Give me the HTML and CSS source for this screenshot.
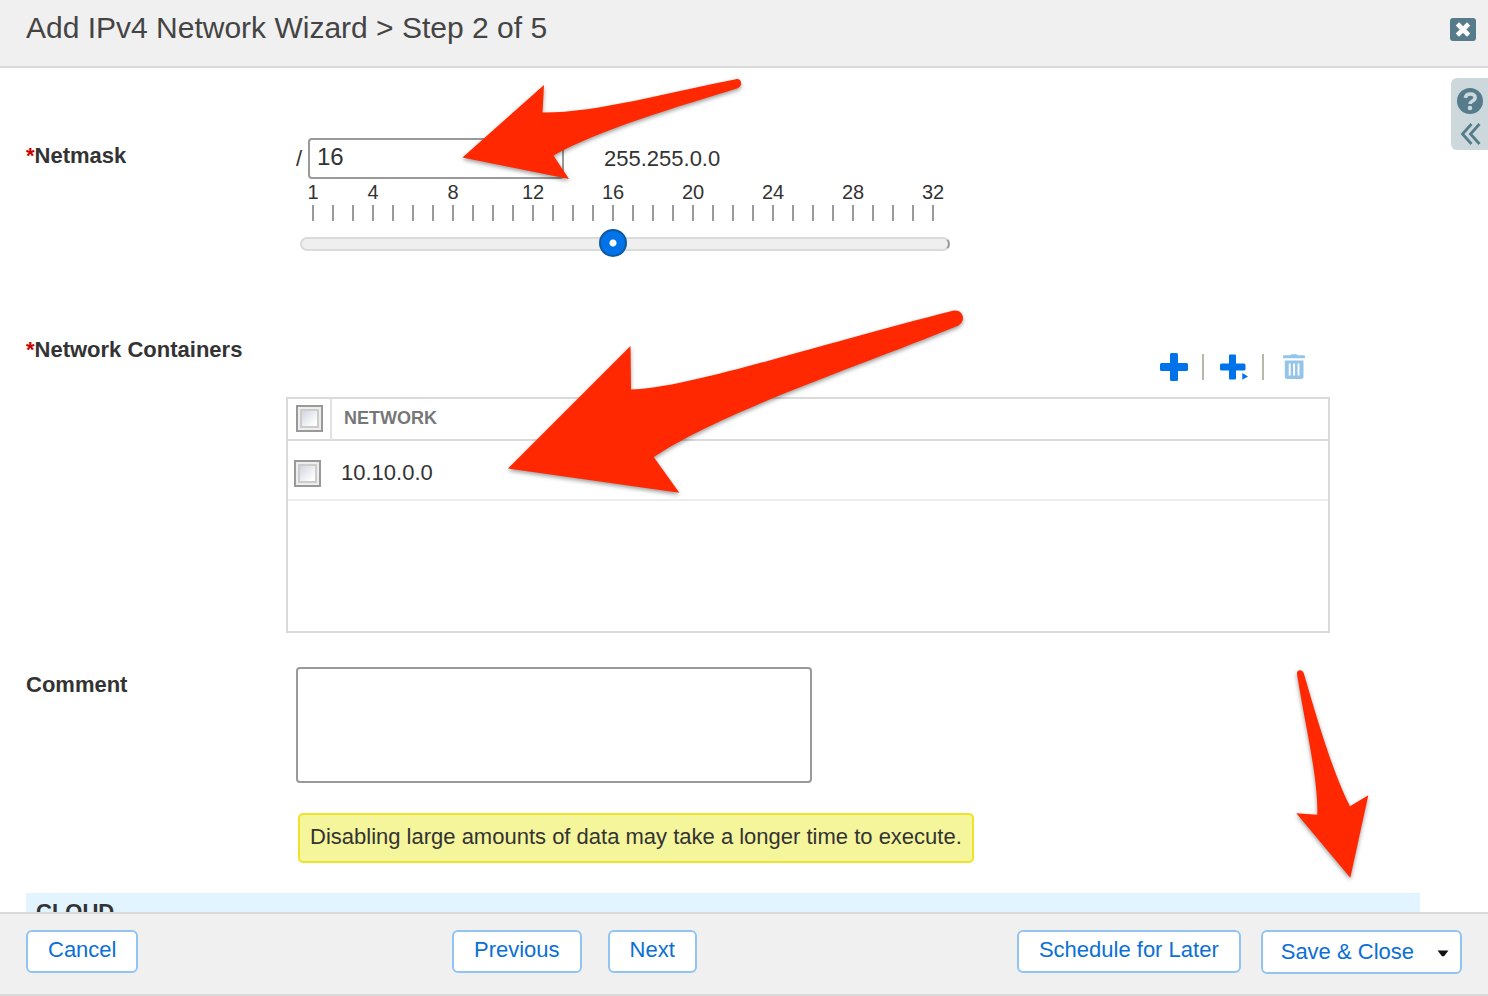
FILE: index.html
```html
<!DOCTYPE html>
<html lang="en">
<head>
  <meta charset="UTF-8" />
  <title>Add IPv4 Network Wizard</title>
  <meta name="viewport" content="width=device-width, initial-scale=1.0"/>
  <link rel="stylesheet" href="styles.css">
</head>
<body>
  <header class="wizard-header">
    <h1>Add IPv4 Network Wizard &gt; Step 2 of 5</h1>
    <button type="button" class="close-btn" aria-label="Close">
      <svg width="26" height="23" viewBox="0 0 26 23"><path d="M9 7.500l8 8M17 7.500l-8 8" stroke="#fff" stroke-width="4.600" stroke-linecap="square" fill="none"/></svg>
    </button>
  </header>

  <main class="wizard-body">
    <form id="wizardForm">
      <div class="form-row netmask-row">
        <label class="row-label" for="netmask"><span class="required">*</span>Netmask</label>
        <div class="row-field">
          <div class="netmask-line">
            <span class="slash">/</span>
            <input type="text" id="netmask" class="netmask-input" value="16" />
            <output class="netmask-value" for="netmask">255.255.0.0</output>
          </div>
          <div class="scale">
            <span>1</span><span></span><span></span><span>4</span>
            <span></span><span></span><span></span><span>8</span>
            <span></span><span></span><span></span><span>12</span>
            <span></span><span></span><span></span><span>16</span>
            <span></span><span></span><span></span><span>20</span>
            <span></span><span></span><span></span><span>24</span>
            <span></span><span></span><span></span><span>28</span>
            <span></span><span></span><span></span><span>32</span>
          </div>
          <div class="slider">
            <input type="range" min="1" max="32" value="16" aria-label="Netmask bits" />
          </div>
        </div>
      </div>

      <div class="form-row network-row">
        <span class="row-label" id="containersLabel"><span class="required">*</span>Network Containers</span>
        <div class="row-field containers">
          <div class="toolbar">
            <button type="button" aria-label="Add">
              <svg width="28" height="28" viewBox="0 0 28 28"><path d="M11.500 0h5a1.500 1.500 0 0 1 1.500 1.500V10h8.500a1.500 1.500 0 0 1 1.500 1.500v5a1.500 1.500 0 0 1-1.500 1.500H18v8.500a1.500 1.500 0 0 1-1.500 1.500h-5a1.500 1.500 0 0 1-1.500-1.500V18H1.500A1.500 1.500 0 0 1 0 16.500v-5A1.500 1.500 0 0 1 1.500 10H10V1.500A1.500 1.500 0 0 1 11.500 0z" fill="#0073ea"/></svg>
            </button>
            <span class="separator"></span>
            <button type="button" aria-label="Add next available">
              <svg width="28" height="28" viewBox="0 0 28 28"><path d="M10 1.500h5a1 1 0 0 1 1 1v8h8a1.500 1.500 0 0 1 1.500 1.500v4A1.500 1.500 0 0 1 24 17.500h-8v8a1 1 0 0 1-1 1h-5a1 1 0 0 1-1-1v-8H1.500A1.500 1.500 0 0 1 0 16v-4a1.500 1.500 0 0 1 1.500-1.500H9v-8a1 1 0 0 1 1-1zM22.300 20l5.900 3.500-5.900 3.300z" fill="#0073ea"/></svg>
            </button>
            <span class="separator"></span>
            <button type="button" aria-label="Delete">
              <svg width="28" height="28" viewBox="0 0 28 28"><path d="M10.500 2.300c.3-.8.700-1 1.500-1h4c.8 0 1.200.2 1.500 1h6.300c.8 0 1.200.4 1.200 1.200v1.800H3V3.500c0-.8.400-1.200 1.200-1.200zM4.800 7.500h18.700v16a2.500 2.500 0 0 1-2.500 2.500H7.300a2.500 2.500 0 0 1-2.500-2.500z" fill="#94c5e8"/><path d="M9.700 10.500v12M14.100 10.500v12M18.500 10.500v12" stroke="#fff" stroke-width="1.900"/></svg>
            </button>
          </div>
          <div class="table-box">
            <table aria-labelledby="containersLabel">
              <thead>
                <tr>
                  <th class="check-cell"><input type="checkbox" aria-label="Select all" /></th>
                  <th>NETWORK</th>
                </tr>
              </thead>
              <tbody>
                <tr>
                  <td class="check-cell"><input type="checkbox" aria-label="Select 10.10.0.0" /></td>
                  <td>10.10.0.0</td>
                </tr>
              </tbody>
            </table>
          </div>
        </div>
      </div>

      <div class="form-row comment-row">
        <label class="row-label" for="comment">Comment</label>
        <div class="row-field">
          <textarea id="comment"></textarea>
          <p class="warning">Disabling large amounts of data may take a longer time to execute.</p>
        </div>
      </div>

      <h2 class="section-title">CLOUD</h2>
    </form>
  </main>

  <footer class="wizard-footer">
    <div class="footer-left">
      <button type="button" class="btn">Cancel</button>
    </div>
    <div class="footer-nav">
      <button type="button" class="btn">Previous</button>
      <button type="button" class="btn">Next</button>
    </div>
    <div class="footer-right">
      <button type="button" class="btn">Schedule for Later</button>
      <div class="split-btn">
        <button type="submit" form="wizardForm">Save &amp; Close</button>
        <button type="button" class="caret-btn" aria-label="More save options">
          <svg width="12" height="7" viewBox="0 0 12 7"><path d="M.500.500h11L7 6.300H5z" fill="#111"/></svg>
        </button>
      </div>
    </div>
  </footer>

  <aside class="help-tab">
    <button type="button" aria-label="Help">
      <svg width="26" height="26" viewBox="0 0 26 26"><circle cx="13" cy="13" r="13" fill="#567c8b"/><path d="M8.300 9.800C8.800 7.200 10.500 6 13.200 6c3 0 4.900 1.400 4.900 3.700 0 3.400-5 3.200-5 6.300" fill="none" stroke="#ccd8dc" stroke-width="3.600"/><circle cx="13" cy="20" r="2.300" fill="#ccd8dc"/></svg>
    </button>
    <button type="button" aria-label="Expand panel">
      <svg width="26" height="22" viewBox="0 0 26 22"><path d="M14.500 1L5.500 11l9 10M22.500 1l-9 10 9 10" fill="none" stroke="#567c8b" stroke-width="2.800"/></svg>
    </button>
  </aside>

  <!-- Callout arrows -->
  <svg class="arrow arrow-netmask" width="290" height="110" viewBox="0 0 290 110">
    <path d="M2.500 87.500L84 15l-1.500 27.500C135 43 210 22 276 9.200c6-1.200 7 7.300 1.500 9C220 36 138 60 93.500 85.500L109 109z"/>
  </svg>
  <svg class="arrow arrow-network" width="466" height="194" viewBox="0 0 466 194">
    <path d="M8 168.500L130.500 46l.5 43.500C185 89 320 44 453 10.700c10-1.800 14 10 5 15C370 62 225 110 153.700 157l25.600 35.700z"/>
  </svg>
  <svg class="arrow arrow-save" width="90" height="220" viewBox="0 0 90 220">
    <path d="M60.300 217.700L6.300 153.300l21 1.400C28.500 119 15 65 7 14c-.6-4.500 5.500-5 6.800-.5C26 55 42 111 60 146.300l18.300-11z"/>
  </svg>
</body>
</html>
```
FILE: styles.css
```css
:root {
  --text: #333;
  --blue: #0a6fd6;
  --bar-bg: #f0f0f0;
  --line: #dadada;
  --slate: #567c8b;
}

* {
  box-sizing: border-box;
}

body {
  margin: 0;
  height: 100vh;
  display: flex;
  flex-direction: column;
  position: relative;
  overflow: hidden;
  background: #fff;
  color: var(--text);
  font-family: "Liberation Sans", Arial, Helvetica, sans-serif;
  font-size: 22px;
}

button,
input,
textarea {
  font-family: inherit;
  font-size: inherit;
  color: inherit;
  margin: 0;
}

button {
  padding: 0;
  border: none;
  background: none;
  cursor: pointer;
}

svg {
  display: block;
}

/* Header */
.wizard-header {
  display: flex;
  flex: none;
  justify-content: space-between;
  align-items: flex-start;
  height: 68px;
  padding: 10px 12px 0 26px;
  background: var(--bar-bg);
  border-bottom: 2px solid var(--line);
}

.wizard-header h1 {
  margin: 0;
  font-size: 30px;
  line-height: 36px;
  font-weight: normal;
  color: #444;
}

.close-btn {
  margin-top: 8px;
  background: var(--slate);
  border-radius: 3px;
}

/* Form */
.wizard-body {
  flex: 1;
  min-height: 0;
  overflow: hidden;
  padding: 70px 68px 0 26px;
}

.form-row {
  display: flex;
}

.row-label {
  flex: none;
  width: 270px;
  font-weight: bold;
  line-height: 36px;
}

.required {
  color: #c00;
}

.row-field {
  flex: 1;
}

.netmask-row {
  margin-bottom: 75px;
}

.netmask-line {
  display: flex;
  align-items: center;
  line-height: 24px;
}

.slash {
  width: 12px;
}

.netmask-input {
  width: 256px;
  height: 41px;
  padding: 0 7px 4px;
  border: 2px solid #999;
  border-radius: 4px;
  font-size: 24px;
}

.netmask-value {
  margin-left: 40px;
}

.scale {
  display: grid;
  grid-template-columns: repeat(32, 20px);
  margin: 3px 0 0 7px;
  font-size: 20px;
  line-height: 20px;
}

.scale span {
  display: flex;
  flex-direction: column;
  justify-content: flex-end;
  align-items: center;
  height: 39px;
}

.scale span::after {
  content: "";
  width: 2px;
  height: 16px;
  margin-top: 3px;
  background: #999;
}

.slider {
  width: 651px;
  height: 28px;
  margin: 8px 0 0 3px;
  padding-right: 3px;
  position: relative;
}

/* Track drawn behind the range input */
.slider::before {
  content: "";
  position: absolute;
  inset: 8px 0 6px 1px;
  border: 2px solid var(--line);
  border-right-color: #999;
  border-radius: 7px;
  background: #efefef;
}

.slider input {
  display: block;
  width: 100%;
  height: 28px;
  appearance: none;
  background: transparent;
  position: relative;
}

.slider input::-webkit-slider-thumb {
  appearance: none;
  width: 28px;
  height: 28px;
  border: 2px solid #0f5a9e;
  border-radius: 50%;
  background: radial-gradient(circle, #fff 3px, #0073ea 4px);
}

.network-row {
  margin-bottom: 34px;
}

.network-row .row-label {
  width: 260px;
}

.containers {
  margin-right: 90px;
  padding-top: 21px;
}

.toolbar {
  display: flex;
  justify-content: flex-end;
  gap: 14px;
  margin: 0 22px 16px 0;
}

.separator {
  width: 4px;
  height: 26px;
  margin-top: 1px;
  border-left: 2px solid #b9b7a8;
}

.table-box {
  height: 236px;
  border: 2px solid var(--line);
}

table {
  width: 100%;
  border-collapse: separate;
  border-spacing: 0;
}

th,
td {
  padding: 0;
  text-align: left;
}

th {
  height: 42px;
  padding: 0 0 2px 12px;
  border-bottom: 2px solid var(--line);
  font-size: 18px;
  color: #777;
}

td {
  height: 60px;
  padding: 6px 0 0 9px;
  border-bottom: 2px solid #ececec;
}

.check-cell {
  width: 44px;
}

th.check-cell {
  padding: 0 0 2px 8px;
  border-right: 2px solid #e2e2e2;
}

td.check-cell {
  padding: 6px 0 0 6px;
}

input[type="checkbox"] {
  appearance: none;
  display: block;
  width: 27px;
  height: 27px;
  border: 2px solid #999;
  box-shadow: inset 0 0 0 2px #eee, inset 0 0 0 4px #ccc;
  background: linear-gradient(135deg, #c3cad6, #fff 75%);
}

textarea {
  display: block;
  width: 516px;
  height: 116px;
  padding: 6px;
  border: 2px solid #999;
  border-radius: 4px;
  resize: none;
}

.warning {
  width: fit-content;
  margin: 30px 0 30px 2px;
  padding: 0 10px 2px;
  border: 2px solid #ece32a;
  border-radius: 5px;
  background: #f5f59c;
  line-height: 44px;
}

.section-title {
  margin: 0;
  padding: 0 10px;
  background: #e1f4ff;
  font-size: 22px;
  line-height: 38px;
}

/* Footer */
.wizard-footer {
  display: grid;
  flex: none;
  grid-template-columns: 426px auto 1fr;
  align-items: start;
  height: 84px;
  padding: 16px 26px 0;
  background: var(--bar-bg);
  border-top: 2px solid var(--line);
  border-bottom: 2px solid var(--line);
}

.footer-nav {
  display: flex;
  gap: 26px;
}

.footer-right {
  display: flex;
  justify-content: flex-end;
  gap: 20px;
}

.btn,
.split-btn {
  height: 43px;
  border: 2px solid #92c4f2;
  border-radius: 6px;
  background: #fff;
  color: var(--blue);
}

.btn {
  padding: 0 20px 4px;
}

.split-btn {
  display: flex;
  height: 44px;
}

.split-btn button {
  padding: 0 12px 0 18px;
}

.split-btn .caret-btn {
  padding: 2px 11px 0;
}

/* Help tab on the right edge */
.help-tab {
  position: absolute;
  top: 78px;
  right: 0;
  display: flex;
  flex-direction: column;
  gap: 9px;
  width: 37px;
  height: 72px;
  padding: 10px 0 0 6px;
  border-radius: 6px 0 0 6px;
  background: #ccd8dc;
}

.arrow {
  position: absolute;
  fill: #ff2800;
  pointer-events: none;
  overflow: visible;
  filter: drop-shadow(0 2px 2px rgba(0, 0, 0, 0.4));
}

.arrow-netmask {
  top: 70px;
  left: 460px;
}

.arrow-network {
  top: 300px;
  left: 500px;
}

.arrow-save {
  right: 108px;
  bottom: 116px;
}
```
